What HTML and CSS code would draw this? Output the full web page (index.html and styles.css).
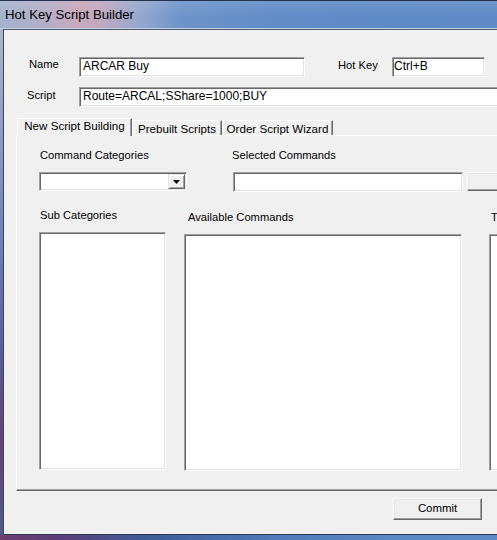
FILE: index.html
```html
<!DOCTYPE html>
<html>
<head>
<meta charset="utf-8">
<title>Hot Key Script Builder</title>
<link rel="stylesheet" href="styles.css">
</head>
<body>
<div class="titlebar"><span class="title">Hot Key Script Builder</span></div>
<div class="frame">
  <div class="glass-left"></div>
  <div class="client">
    <div class="row row-name">
      <span class="lbl lbl-name">Name</span>
      <div class="field field-name">ARCAR Buy</div>
      <span class="lbl lbl-hotkey">Hot Key</span>
      <div class="field field-hotkey">Ctrl+B</div>
    </div>
    <div class="row row-script">
      <span class="lbl lbl-script">Script</span>
      <div class="field field-script">Route=ARCAL;SShare=1000;BUY</div>
    </div>
    <div class="tabs">
      <div class="tab tab-active tab-new">New Script Building</div>
      <div class="tab tab-prebuilt">Prebuilt Scripts</div>
      <div class="tab tab-order">Order Script Wizard</div>
    </div>
    <div class="panel">
      <div class="prow prow-a">
        <div class="col col-cat">
          <span class="plbl">Command Categories</span>
          <div class="combo">
            <div class="combo-btn">
              <svg width="7" height="4" viewBox="0 0 7 4"><polygon points="0,0 7,0 3.5,4" fill="#000"/></svg>
            </div>
          </div>
        </div>
        <div class="col col-sel">
          <span class="plbl">Selected Commands</span>
          <div class="sel-line">
            <div class="field field-sel"></div>
            <div class="btn btn-side"></div>
          </div>
        </div>
      </div>
      <div class="prow prow-b">
        <div class="col col-sub">
          <span class="plbl">Sub Categories</span>
          <div class="list list-sub"></div>
        </div>
        <div class="col col-avail">
          <span class="plbl plbl-avail">Available Commands</span>
          <div class="list list-avail"></div>
        </div>
        <div class="col col-third">
          <span class="plbl plbl-third">T</span>
          <div class="list list-third"></div>
        </div>
      </div>
    </div>
    <div class="footer">
      <div class="btn btn-commit">Commit</div>
    </div>
  </div>
</div>
<div class="glass-bottom"></div>
</body>
</html>
```
FILE: styles.css
```css
html, body {
  margin: 0;
  padding: 0;
}
body {
  width: 497px;
  height: 540px;
  overflow: hidden;
  font-family: "Liberation Sans", Arial, sans-serif;
  font-size: 11.2px;
  color: #000;
  background: #5b86c2;
}
.titlebar {
  box-sizing: border-box;
  height: 29px;
  border-top: 1px solid #22324e;
  border-bottom: 1px solid #c4d2e6;
  background:
    linear-gradient(180deg, rgba(255,255,255,0.10) 0%, rgba(255,255,255,0) 60%),
    linear-gradient(90deg, #a3b3cc 0%, #b3afc8 9%, #c9a8bb 16%, #c2a9c0 20%, #95a8cf 28%, #6f94c9 36%, #628cc6 55%, #5d89c5 80%, #5f8ac6 100%);
  display: flex;
  align-items: center;
}
.title {
  font-size: 13.2px;
  line-height: 27px;
  padding-left: 5px;
  color: #000;
}
.frame {
  display: flex;
  height: 506px;
}
.glass-left {
  flex: 0 0 3px;
  background: linear-gradient(180deg, #aab6cc 0%, #8f9cc4 20%, #6d7ab8 45%, #5a5a9a 65%, #6a3e74 82%, #4f5c86 100%);
}
.client {
  flex: 0 0 520px;
  box-sizing: border-box;
  height: 506px;
  border-left: 1px solid #3a465e;
  border-top: 1px solid #4f5b72;
  border-bottom: 1px solid #2c3850;
  background: #f0f0f0;
  padding-top: 27px;
}
.glass-bottom {
  height: 5px;
  background: linear-gradient(90deg, #6c3f6e 0%, #5a3f78 12%, #3f5d97 30%, #4f79b8 55%, #5c88c4 80%, #5d89c5 100%);
}
.row {
  display: flex;
  align-items: flex-start;
}
.row-name {
  padding-left: 25px;
  height: 20px;
}
.row-script {
  margin-top: 10px;
  padding-left: 23px;
  height: 20px;
}
.lbl {
  line-height: 13px;
  white-space: nowrap;
}
.lbl-name {
  width: 50px;
  padding-top: 1px;
}
.lbl-hotkey {
  margin-left: 33px;
  width: 54px;
  padding-top: 2px;
}
.lbl-script {
  width: 52px;
  padding-top: 2px;
}
.field {
  box-sizing: border-box;
  height: 20px;
  background: #fff;
  border: 1px solid;
  border-color: #a0a0a0 #fff #fff #a0a0a0;
  box-shadow: inset 1px 1px 0 #696969, inset -1px -1px 0 #e3e3e3;
  line-height: 16px;
  padding: 0 3px;
  white-space: nowrap;
  overflow: hidden;
  font-size: 12px;
}
.field-name { width: 226px; }
.field-hotkey { width: 93px; padding-left: 1px; }
.field-script { width: 440px; }

.tabs {
  display: flex;
  align-items: flex-end;
  margin-top: 11px;
  padding-left: 13px;
  height: 17px;
}
.tab {
  box-sizing: border-box;
  height: 15px;
  border-top: 1px solid #fff;
  border-left: 1px solid #fff;
  border-right: 1px solid #696969;
  box-shadow: inset -1px 0 0 #a0a0a0;
  background: #f0f0f0;
  line-height: 13px;
  padding-top: 1px;
  text-align: center;
  white-space: nowrap;
  font-size: 11.6px;
}
.tab-active {
  height: 18px;
  margin-bottom: -1px;
  padding-top: 0;
  position: relative;
  z-index: 1;
}
.tab-new { width: 115px; }
.tab-prebuilt { width: 90px; }
.tab-order { width: 111px; }

.panel {
  margin-left: 12px;
  width: 510px;
  border-top: 1px solid #fff;
  border-left: 1px solid #fff;
  border-bottom: 1px solid #696969;
  box-shadow: inset 0 -1px 0 #a0a0a0;
  padding-top: 13px;
  box-sizing: content-box;
  height: 341px;
}
.prow {
  display: flex;
  align-items: flex-start;
}
.col {
  display: flex;
  flex-direction: column;
}
.plbl {
  line-height: 13px;
  height: 13px;
  white-space: nowrap;
}
.col-cat {
  margin-left: 22px;
  width: 148px;
}
.col-cat .plbl { padding-left: 1px; }
.combo {
  box-sizing: border-box;
  margin-top: 10px;
  height: 19px;
  width: 148px;
  background: #fff;
  border: 1px solid;
  border-color: #a0a0a0 #fff #fff #a0a0a0;
  box-shadow: inset 1px 1px 0 #696969, inset -1px -1px 0 #e3e3e3;
  display: flex;
  justify-content: flex-end;
  padding: 1px;
}
.combo-btn {
  box-sizing: border-box;
  width: 17px;
  height: 15px;
  background: #f0f0f0;
  border: 1px solid;
  border-color: #e3e3e3 #696969 #696969 #e3e3e3;
  box-shadow: inset 1px 1px 0 #fff, inset -1px -1px 0 #a0a0a0;
  display: flex;
  align-items: center;
  justify-content: center;
}
.col-sel {
  margin-left: 45px;
}
.sel-line {
  display: flex;
  margin-top: 10px;
  margin-left: 1px;
}
.field-sel {
  width: 230px;
  height: 20px;
}
.btn {
  box-sizing: border-box;
  background: #f0f0f0;
  border: 1px solid;
  border-color: #fff #696969 #696969 #fff;
  box-shadow: inset -1px -1px 0 #a0a0a0, inset 1px 1px 0 #e3e3e3;
}
.btn-side {
  margin-left: 4px;
  width: 40px;
  height: 19px;
}
.prow-b {
  margin-top: 17px;
}
.list {
  box-sizing: border-box;
  margin-top: 10px;
  background: #fff;
  border: 1px solid;
  border-color: #a0a0a0 #fff #fff #a0a0a0;
  box-shadow: inset 1px 1px 0 #696969, inset -1px -1px 0 #e3e3e3;
}
.col-sub {
  margin-left: 22px;
  width: 127px;
}
.col-sub .plbl { padding-left: 1px; }
.list-sub {
  width: 127px;
  height: 238px;
}
.col-avail {
  margin-left: 18px;
  width: 278px;
  margin-top: 2px;
}
.plbl-avail { padding-left: 4px; }
.list-avail {
  width: 278px;
  height: 237px;
}
.col-third {
  margin-left: 27px;
  width: 60px;
  margin-top: 2px;
}
.plbl-third { padding-left: 2px; }
.list-third {
  width: 60px;
  height: 237px;
}
.footer {
  margin-top: 7px;
  padding-left: 389px;
}
.btn-commit {
  width: 89px;
  height: 22px;
  line-height: 18px;
  text-align: center;
  font-size: 11.4px;
}
```
